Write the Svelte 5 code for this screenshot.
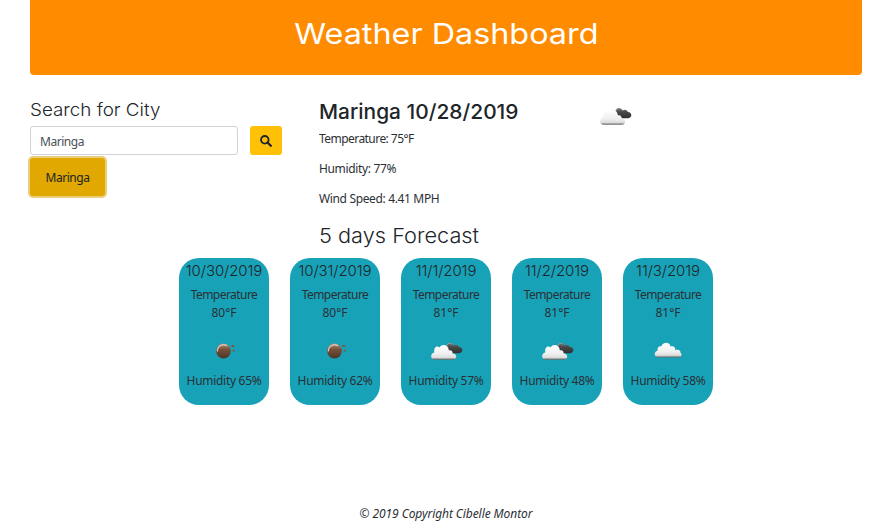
<script>
  const forecast = [
    { date: '10/30/2019', temp: '80°F', humidity: '65%', icon: 'sun' },
    { date: '10/31/2019', temp: '80°F', humidity: '62%', icon: 'sun' },
    { date: '11/1/2019', temp: '81°F', humidity: '57%', icon: 'broken' },
    { date: '11/2/2019', temp: '81°F', humidity: '48%', icon: 'broken' },
    { date: '11/3/2019', temp: '81°F', humidity: '58%', icon: 'cloud' }
  ];
  let city = $state('Maringa');
</script>

{#snippet weatherIcon(kind)}
  <svg class="icon" width="50" height="50" viewBox="0 0 50 50" aria-hidden="true">
    <defs>
      <linearGradient id="white-cloud" x1="0" y1="0" x2="0" y2="1">
        <stop offset="0" stop-color="#fff" />
        <stop offset=".6" stop-color="#f0f0f0" />
        <stop offset=".85" stop-color="#ddd" />
        <stop offset="1" stop-color="#666" />
      </linearGradient>
      <linearGradient id="dark-cloud" x1="0" y1="0" x2="0" y2="1">
        <stop offset="0" stop-color="#777" />
        <stop offset=".4" stop-color="#484848" />
        <stop offset="1" stop-color="#303030" />
      </linearGradient>
      <linearGradient id="bronze" x1="0" y1="0" x2="0" y2="1">
        <stop offset="0" stop-color="#ad8a78" />
        <stop offset=".4" stop-color="#765039" />
        <stop offset="1" stop-color="#4d3629" />
      </linearGradient>
    </defs>
    {#if kind === 'sun'}
      <circle cx="24.500" cy="26" r="7.400" fill="url(#bronze)" />
      <path d="M18.400 26.500a6.200 6.200 0 0 1 9.700-5.600" fill="none" stroke="#dbc1b2" stroke-width="1.300" />
      <path d="M32.500 20h2.800v2h-2.800zM33.700 24.800h2v1.800h-2z" fill="#80563f" />
    {:else if kind === 'broken'}
      <path d="M25.500 24c-1-7 5.500-7.300 7.200-3.500 2-1.500 4.600-.6 5.100 1.600 4.400-.2 4.900 5.900.4 6.100H31z" fill="url(#dark-cloud)" />
      <path d="M25.700 21.500c.3-3.300 3.600-3.800 5.100-2.200" fill="none" stroke="#a5a5a5" stroke-width="1" />
      <path d="M13.700 34.700c-4.500 0-4.700-6.600-.4-7.300-.9-5.400 3-7 5.300-5 2.700-4.500 9.200-2.500 9.200 3 2.500-.8 4.100.9 3.800 3 4.800.2 4.800 6.300.1 6.300z" fill="url(#white-cloud)" />
    {:else}
      <path d="M15.500 32.500c-4.900 0-4.700-6.300-1-6.700-.5-3.900 2.200-5 3.700-4.200 1.500-5.300 9-5 9.300-.1 3-1 5.100 1 4.700 3.500 3.500-.9 5.500.5 5.300 2.700 1.900.9 1 4.800-1 4.800z" fill="url(#white-cloud)" />
    {/if}
  </svg>
{/snippet}

<div class="page">
  <header><h1><span>Weather Dashboard</span></h1></header>
  <main>
    <aside>
      <h4><span>Search for City</span></h4>
      <div class="search">
        <input aria-label="City" bind:value={city} />
        <button class="go" aria-label="Search">
          <svg width="12" height="12" viewBox="0 0 12 12"><circle cx="4.800" cy="4.800" r="3.800" fill="none" stroke="#212529" stroke-width="1.800" /><path d="M7.800 7.800l3 3" stroke="#212529" stroke-width="2.300" stroke-linecap="round" /></svg>
        </button>
      </div>
      <button class="recent">Maringa</button>
    </aside>
    <section class="current">
      <div class="heading">
        <h3><span>Maringa 10/28/2019</span></h3>
        {@render weatherIcon('broken')}
      </div>
      <p class="temperature">Temperature: 75°F</p>
      <p>Humidity: 77%</p>
      <p>Wind Speed: 4.41 MPH</p>
      <h2><span>5 days Forecast</span></h2>
    </section>
  </main>
  <section class="cards">
    {#each forecast as day}
      <article>
        <h5>{day.date}</h5>
        <p class="temp"><span>Temperature</span><br />{day.temp}</p>
        {@render weatherIcon(day.icon)}
        <p class="hum">Humidity {day.humidity}</p>
      </article>
    {/each}
  </section>
  <footer><em>© 2019 Copyright Cibelle Montor</em></footer>
</div>

<style>
  :global(body) { margin: 0; background: #fff; }
  .page { box-sizing: border-box; height: 528px; padding: 0 30px; overflow: hidden; display: flex; flex-direction: column; font: 12px/18px "Noto Sans", sans-serif; color: #212529; }
  h1, h2, h3, h4, h5, p { margin: 0; }
  h1, h2, h3, h4, h5 { font-family: Inter, sans-serif; font-weight: 300; white-space: nowrap; }
  h1 span, h2 span, h3 span, h4 span { display: inline-block; transform-origin: left; }
  header { height: 75px; flex: none; background: #ff8c00; border-radius: 0 0 4px 4px; text-align: center; color: #fff; }
  h1 { font-size: 29px; line-height: 36px; padding-top: 16px; font-weight: 400; }
  h1 span { transform-origin: center; transform: scaleX(1.115); }
  main { display: flex; height: 183px; flex: none; }
  aside { width: 289px; padding-top: 24px; flex: none; }
  h4 { font-size: 17.500px; line-height: 22px; margin-bottom: 5px; }
  h4 span { transform: scaleX(1.075); }
  .search { display: flex; gap: 12px; }
  input { box-sizing: border-box; width: 208px; height: 29px; border: 1px solid #ced4da; border-radius: 3px; padding: 2px 9px 0; font: inherit; letter-spacing: -.45px; color: #495057; }
  button { border: 0; font: inherit; color: #212529; }
  .go { width: 32px; height: 29px; padding: 0; border-radius: 3px; background: #ffc107; display: flex; align-items: center; justify-content: center; }
  .recent { display: block; width: 75px; height: 38px; margin-top: 3px; padding: 2px 0 0; letter-spacing: -.45px; background: #e0a800; border-radius: 3px; box-shadow: 0 0 0 2px #ebce7c; }
  .current { flex: 1; padding-top: 25px; }
  .current p, .temp, .hum, footer { color: #2b3035; }
  .heading { display: flex; height: 30px; }
  h3 { width: 271px; font-size: 20.500px; line-height: 24px; font-weight: 500; }
  h3 span { transform: scaleX(1.02); }
  .heading .icon { margin-top: -10px; }
  .current p { height: 30px; letter-spacing: -.35px; }
  .current .temperature { letter-spacing: -.55px; }
  h2 { font-size: 20.500px; line-height: 26px; padding-top: 3px; }
  h2 span { transform: scaleX(1.061); }
  .cards { display: flex; justify-content: center; gap: 21px; }
  article { width: 90px; height: 147px; border-radius: 20px; background: #17a2b8; text-align: center; }
  h5 { font-size: 15px; line-height: 18px; padding-top: 4px; height: 24px; letter-spacing: -.1px; }
  article .icon { display: block; margin: 3px auto -3px; }
  .temp span { letter-spacing: -.55px; }
  .hum { letter-spacing: -.3px; }
  footer { margin-top: auto; height: 23px; text-align: center; letter-spacing: -.08px; }
</style>
